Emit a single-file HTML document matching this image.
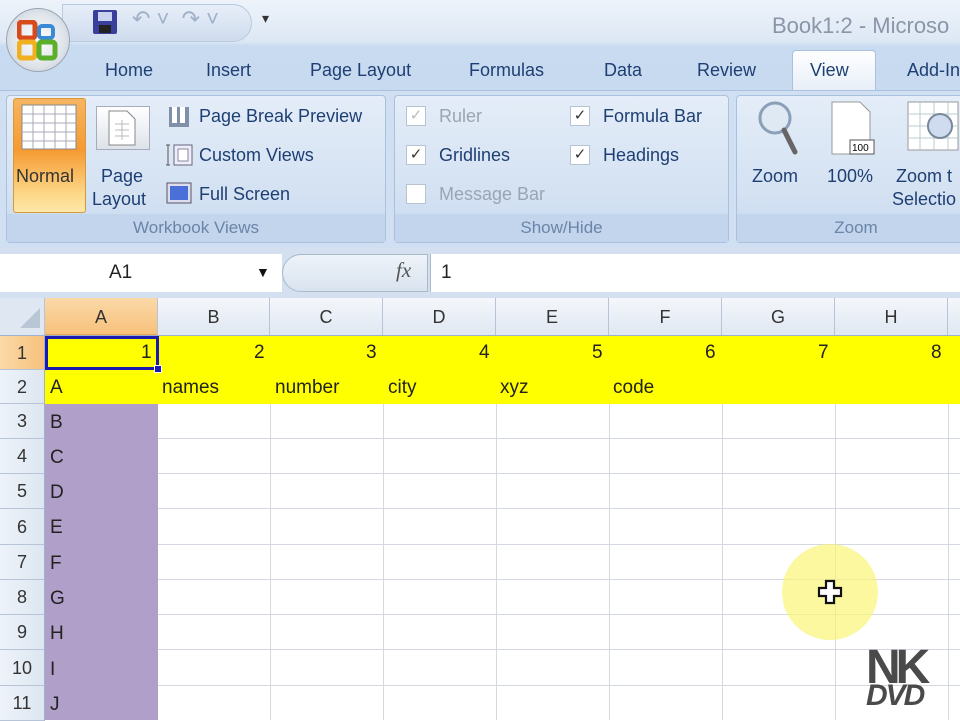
<!DOCTYPE html>
<html><head><meta charset="utf-8"><style>
*{margin:0;padding:0;box-sizing:border-box}
body{width:960px;height:720px;overflow:hidden;position:relative;background:#fff;font-family:"Liberation Sans",sans-serif}
.a{position:absolute}
.tab{position:absolute;top:60px;font-size:18px;color:#1e3f73;white-space:nowrap}
.rb{color:#1e3f73;font-size:18px;position:absolute}
.dis{color:#9aa5b4}
.grp{position:absolute;top:95px;height:148px;border:1px solid #a9c1dd;border-radius:4px;background:linear-gradient(#e4edf8,#d3e1f2 70%,#c6d8ee)}
.gl{position:absolute;bottom:0;left:0;right:0;height:28px;background:#c2d5ec;color:#6b85a8;font-size:17px;text-align:center;line-height:28px}
.cb{position:absolute;width:20px;height:20px;border:1px solid #b7c3d2;background:#fff;font-size:15px;line-height:18px;text-align:center;color:#333}
.ch{position:absolute;top:298px;height:38px;border-right:1px solid #b7c3d6;background:linear-gradient(#f4f7fb,#dfe7f2);text-align:center;line-height:38px;font-size:18px;color:#333}
.rh{position:absolute;left:0;width:45px;border-bottom:1px solid #b7c3d6;background:linear-gradient(90deg,#eef3f9,#dde6f1);text-align:center;font-size:18px;color:#333;border-right:1px solid #9eb1cc}
.hl{position:absolute;left:45px;right:0;height:1px;background:#d4d8e0}
.vl{position:absolute;top:404px;bottom:0;width:1px;background:#d4d8e0}
.t{position:absolute;font-size:19px;color:#222}
</style></head><body>
<div class="a" style="left:0;top:0;width:960px;height:92px;background:linear-gradient(#eef3fa,#dde8f5 45%,#c9dbf1 50%,#c8daf0)"></div>
<div class="a" style="left:62px;top:4px;width:190px;height:38px;border-radius:0 20px 20px 0;background:linear-gradient(#e7eef8,#cfdcee);border:1px solid #b8c9e0"></div>
<svg class="a" style="left:92px;top:9px" width="26" height="26"><rect x="1" y="1" width="24" height="24" rx="2" fill="#3a3f9c"/><rect x="6" y="3" width="14" height="9" fill="#c9d3f0"/><rect x="7" y="16" width="12" height="8" fill="#222"/></svg>
<div class="a" style="left:132px;top:6px;font-size:22px;color:#9fb0c7">↶ ˅ &nbsp;↷ ˅</div>
<div class="a" style="left:262px;top:10px;font-size:14px;color:#333">▾</div>
<div class="a" style="left:772px;top:13px;font-size:22px;color:#8a96a8;white-space:nowrap">Book1:2 - Microso</div>
<div class="a" style="left:6px;top:8px;width:64px;height:64px;border-radius:50%;background:radial-gradient(#fff,#dfe4ea 60%,#b8c2cc);border:1px solid #9aa6b4"></div>
<svg class="a" style="left:17px;top:20px" width="42" height="42"><rect x="2" y="2" width="16" height="16" rx="3" fill="none" stroke="#d84a1c" stroke-width="5"/><rect x="22" y="6" width="14" height="12" rx="3" fill="none" stroke="#3a8ad8" stroke-width="4"/><rect x="2" y="22" width="16" height="16" rx="3" fill="none" stroke="#f0b020" stroke-width="5"/><rect x="22" y="22" width="16" height="16" rx="3" fill="none" stroke="#5ab02a" stroke-width="5"/></svg>
<div class="tab" style="left:105px">Home</div>
<div class="tab" style="left:206px">Insert</div>
<div class="tab" style="left:310px">Page Layout</div>
<div class="tab" style="left:469px">Formulas</div>
<div class="tab" style="left:604px">Data</div>
<div class="tab" style="left:697px">Review</div>
<div class="a" style="left:792px;top:50px;width:84px;height:42px;background:linear-gradient(#fff,#e6eef8);border:1px solid #a9c1dd;border-bottom:none;border-radius:4px 4px 0 0"></div>
<div class="tab" style="left:810px">View</div>
<div class="tab" style="left:907px">Add-In</div>
<div class="a" style="left:0;top:90px;width:960px;height:158px;background:#d0dff2;border-top:1px solid #a9c1dd"></div>
<div class="grp" style="left:6px;width:380px"><div class="gl">Workbook Views</div></div>
<div class="grp" style="left:394px;width:335px"><div class="gl">Show/Hide</div></div>
<div class="grp" style="left:736px;width:240px"><div class="gl">Zoom</div></div>
<div class="a" style="left:13px;top:98px;width:73px;height:115px;border:1px solid #d49a3c;border-radius:3px;background:linear-gradient(#f7b560,#f59a32 45%,#fcd98a 85%,#fde7a8)"></div>
<svg class="a" style="left:21px;top:104px" width="56" height="46"><rect x="1" y="1" width="54" height="44" fill="#fff" stroke="#888"/><g stroke="#aab" stroke-width="1"><path d="M1 10H55M1 19H55M1 28H55M1 37H55M12 1V45M23 1V45M34 1V45M45 1V45"/></g></svg>
<div class="rb" style="left:16px;top:166px;color:#333">Normal</div>
<div class="a" style="left:96px;top:106px;width:54px;height:44px;border:1px solid #aab;background:linear-gradient(#fff,#dde3ea)"></div>
<svg class="a" style="left:108px;top:110px" width="28" height="36"><path d="M1 1H19L27 9V35H1Z" fill="#fff" stroke="#888"/><path d="M7 14H21M7 20H21M7 26H21M14 10V30" stroke="#bbb"/></svg>
<div class="rb" style="left:101px;top:166px">Page</div>
<div class="rb" style="left:92px;top:189px">Layout</div>
<svg class="a" style="left:168px;top:106px" width="22" height="22"><rect x="1" y="1" width="20" height="20" fill="#7f90a8"/><rect x="4" y="1" width="5" height="16" fill="#fff"/><rect x="12" y="1" width="5" height="16" fill="#fff"/></svg>
<div class="rb" style="left:199px;top:106px">Page Break Preview</div>
<svg class="a" style="left:166px;top:142px" width="28" height="26"><path d="M2 3V23M0 3H4M0 23H4" stroke="#555"/><rect x="8" y="3" width="18" height="20" fill="#eef" stroke="#667"/><rect x="12" y="7" width="10" height="12" fill="#fff" stroke="#889"/></svg>
<div class="rb" style="left:199px;top:145px">Custom Views</div>
<svg class="a" style="left:166px;top:182px" width="26" height="22"><rect x="1" y="1" width="24" height="20" fill="#dde" stroke="#556"/><rect x="4" y="4" width="18" height="14" fill="#4a6fd8"/></svg>
<div class="rb" style="left:199px;top:184px">Full Screen</div>
<div class="cb dis" style="left:406px;top:106px;color:#bbb">✓</div><div class="rb dis" style="left:439px;top:106px">Ruler</div>
<div class="cb" style="left:406px;top:145px">✓</div><div class="rb" style="left:439px;top:145px">Gridlines</div>
<div class="cb" style="left:406px;top:184px"></div><div class="rb dis" style="left:439px;top:184px">Message Bar</div>
<div class="cb" style="left:570px;top:106px">✓</div><div class="rb" style="left:603px;top:106px">Formula Bar</div>
<div class="cb" style="left:570px;top:145px">✓</div><div class="rb" style="left:603px;top:145px">Headings</div>
<svg class="a" style="left:757px;top:100px" width="44" height="58"><circle cx="18" cy="18" r="15" fill="#dfe9f4" stroke="#8aa0b8" stroke-width="3"/><path d="M27 30L38 52" stroke="#666" stroke-width="5" stroke-linecap="round"/></svg>
<div class="rb" style="left:752px;top:166px">Zoom</div>
<svg class="a" style="left:830px;top:100px" width="46" height="56"><path d="M2 2H30L40 12V54H2Z" fill="#fff" stroke="#999"/><rect x="20" y="40" width="24" height="14" fill="#fff" stroke="#555"/><text x="22" y="51" font-size="10" font-family="Liberation Sans">100</text></svg>
<div class="rb" style="left:827px;top:166px">100%</div>
<svg class="a" style="left:906px;top:100px" width="54" height="56"><rect x="2" y="2" width="50" height="48" fill="#fff" stroke="#999"/><path d="M2 14H52M2 26H52M2 38H52M14 2V50M28 2V50M42 2V50" stroke="#bcc"/><circle cx="34" cy="26" r="12" fill="#cfdcf0" stroke="#789" stroke-width="2"/></svg>
<div class="rb" style="left:896px;top:166px;white-space:nowrap">Zoom t</div>
<div class="rb" style="left:892px;top:189px;white-space:nowrap">Selectio</div>
<div class="a" style="left:0;top:248px;width:960px;height:50px;background:#d4e0ef"></div>
<div class="a" style="left:0;top:254px;width:282px;height:38px;background:#fff"></div>
<div class="a" style="left:109px;top:262px;font-size:19px;color:#222">A1</div>
<div class="a" style="left:256px;top:264px;font-size:14px;color:#111">▼</div>
<div class="a" style="left:282px;top:254px;width:146px;height:38px;border-radius:19px 0 0 19px;background:linear-gradient(#eef3f9,#d9e3ef);border:1px solid #aab8ca"></div>
<div class="a" style="left:396px;top:258px;font-size:21px;font-style:italic;font-family:'Liberation Serif',serif;color:#555">fx</div>
<div class="a" style="left:430px;top:254px;width:530px;height:38px;background:#fff;border-left:1px solid #aab8ca"></div>
<div class="a" style="left:441px;top:262px;font-size:19px;color:#222">1</div>
<div class="a" style="left:0;top:298px;width:45px;height:38px;background:#dfe7f2;border-right:1px solid #b7c3d6"></div>
<svg class="a" style="left:18px;top:306px" width="24" height="24"><path d="M22 2V22H2Z" fill="#b9c6d6"/></svg>
<div class="ch" style="left:45px;width:113px;background:linear-gradient(#fbd9a8,#f7c17c);border-bottom:2px solid #e9a650">A</div>
<div class="ch" style="left:158px;width:112px">B</div>
<div class="ch" style="left:270px;width:113px">C</div>
<div class="ch" style="left:383px;width:113px">D</div>
<div class="ch" style="left:496px;width:113px">E</div>
<div class="ch" style="left:609px;width:113px">F</div>
<div class="ch" style="left:722px;width:113px">G</div>
<div class="ch" style="left:835px;width:113px">H</div>
<div class="ch" style="left:948px;width:20px"></div>
<div class="a" style="left:0;top:335px;width:960px;height:1px;background:#9eb1cc"></div>
<div class="rh" style="top:336px;height:34px;line-height:34px;background:linear-gradient(90deg,#fbd9a8,#f7c17c)">1</div>
<div class="rh" style="top:370px;height:34px;line-height:34px">2</div>
<div class="rh" style="top:404px;height:35px;line-height:35px">3</div>
<div class="rh" style="top:439px;height:35px;line-height:35px">4</div>
<div class="rh" style="top:474px;height:35px;line-height:35px">5</div>
<div class="rh" style="top:509px;height:36px;line-height:36px">6</div>
<div class="rh" style="top:545px;height:35px;line-height:35px">7</div>
<div class="rh" style="top:580px;height:35px;line-height:35px">8</div>
<div class="rh" style="top:615px;height:35px;line-height:35px">9</div>
<div class="rh" style="top:650px;height:36px;line-height:36px">10</div>
<div class="rh" style="top:686px;height:35px;line-height:35px">11</div>
<div class="hl" style="top:438px"></div><div class="hl" style="top:473px"></div><div class="hl" style="top:508px"></div><div class="hl" style="top:544px"></div><div class="hl" style="top:579px"></div><div class="hl" style="top:614px"></div><div class="hl" style="top:649px"></div><div class="hl" style="top:685px"></div>
<div class="vl" style="left:270px"></div><div class="vl" style="left:383px"></div><div class="vl" style="left:496px"></div><div class="vl" style="left:609px"></div><div class="vl" style="left:722px"></div><div class="vl" style="left:835px"></div><div class="vl" style="left:948px"></div>
<div class="a" style="left:45px;top:336px;width:915px;height:68px;background:#ffff00"></div>
<div class="a" style="left:45px;top:404px;width:113px;height:316px;background:#b09fc8"></div>
<div class="a" style="left:45px;top:336px;width:114px;height:34px;border:3px solid #1a1ab0"></div>
<div class="a" style="left:154px;top:365px;width:8px;height:8px;background:#1a1ab0;border:1px solid #fff"></div>
<div class="t" style="left:141px;top:342px">1</div>
<div class="t" style="left:254px;top:342px">2</div>
<div class="t" style="left:366px;top:342px">3</div>
<div class="t" style="left:479px;top:342px">4</div>
<div class="t" style="left:592px;top:342px">5</div>
<div class="t" style="left:705px;top:342px">6</div>
<div class="t" style="left:818px;top:342px">7</div>
<div class="t" style="left:931px;top:342px">8</div>
<div class="t" style="left:50px;top:377px">A</div>
<div class="t" style="left:162px;top:377px">names</div>
<div class="t" style="left:275px;top:377px">number</div>
<div class="t" style="left:388px;top:377px">city</div>
<div class="t" style="left:500px;top:377px">xyz</div>
<div class="t" style="left:613px;top:377px">code</div>
<div class="t" style="left:50px;top:412px">B</div>
<div class="t" style="left:50px;top:447px">C</div>
<div class="t" style="left:50px;top:482px">D</div>
<div class="t" style="left:50px;top:517px">E</div>
<div class="t" style="left:50px;top:553px">F</div>
<div class="t" style="left:50px;top:588px">G</div>
<div class="t" style="left:50px;top:623px">H</div>
<div class="t" style="left:50px;top:659px">I</div>
<div class="t" style="left:50px;top:694px">J</div>
<div class="a" style="left:782px;top:544px;width:96px;height:96px;border-radius:50%;background:rgba(250,245,120,0.7)"></div>
<svg class="a" style="left:817px;top:579px" width="28" height="28"><path d="M9 2H17V9H24V17H17V24H9V17H2V9H9Z" fill="#fff" stroke="#111" stroke-width="2.2"/></svg>
<div class="a" style="left:866px;top:646px;font-size:48px;font-weight:bold;color:#4a4a4a;letter-spacing:-5px;line-height:44px">NK</div>
<div class="a" style="left:866px;top:681px;font-size:30px;font-weight:bold;font-style:italic;color:#4a4a4a;letter-spacing:-2px;line-height:30px">DVD</div>
</body></html>
